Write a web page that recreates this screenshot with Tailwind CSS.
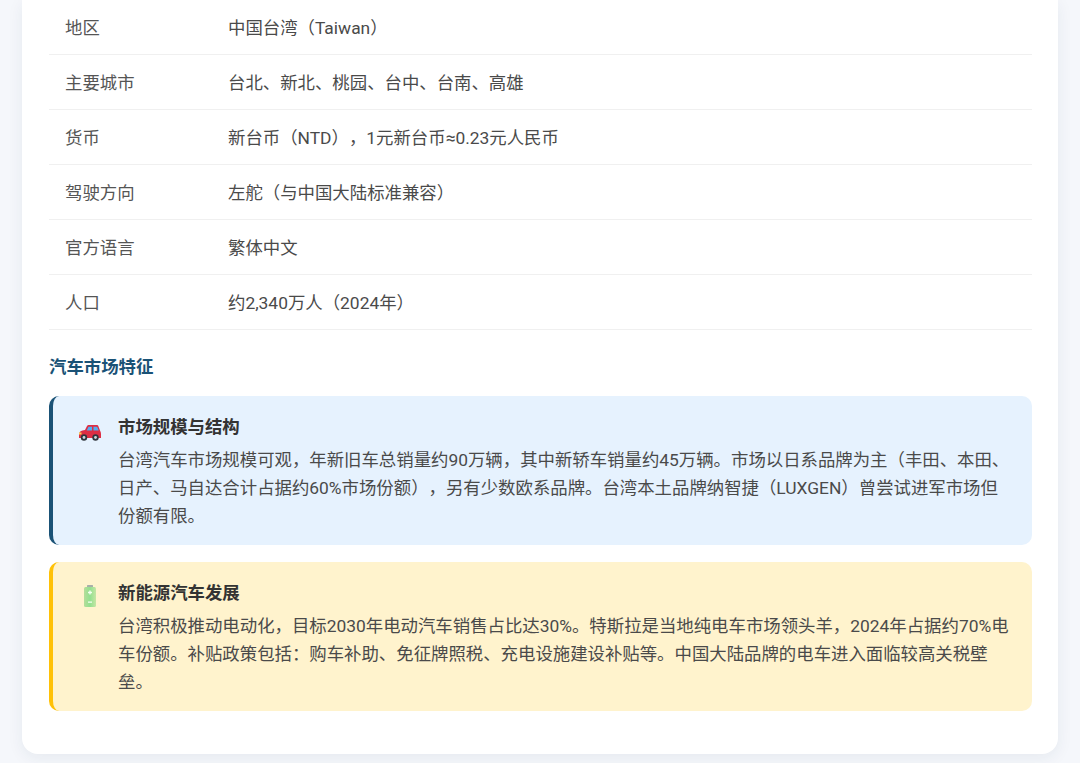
<!DOCTYPE html>
<html lang="zh-CN">
<head>
    <meta charset="UTF-8">
    <title>台湾汽车市场</title>
    <script src="https://cdn.jsdelivr.net/npm/@tailwindcss/browser@4"></script>
</head>
<body class="h-[763px] overflow-hidden bg-[#f5f7fb] font-['Roboto','Noto_Sans_CJK_SC',sans-serif] text-[17.4px] text-[#4a4a4a] [text-spacing-trim:space-all]">
    <div class="mx-[22px] h-[754px] rounded-b-2xl bg-white pr-[26px] pl-[27px] shadow-[0_4px_16px_rgba(30,50,90,0.07)]">
        <!-- basic info -->
        <div class="grid grid-cols-[179px_1fr]">
            <div class="flex h-[55px] items-center border-b border-[#f0f0f0] pt-[2px] pl-4 text-[#555]">地区</div>
            <div class="flex h-[55px] items-center border-b border-[#f0f0f0] pt-[2px]">中国台湾（Taiwan）</div>
            <div class="flex h-[55px] items-center border-b border-[#f0f0f0] pt-[2px] pl-4 text-[#555]">主要城市</div>
            <div class="flex h-[55px] items-center border-b border-[#f0f0f0] pt-[2px]">台北、新北、桃园、台中、台南、高雄</div>
            <div class="flex h-[55px] items-center border-b border-[#f0f0f0] pt-[2px] pl-4 text-[#555]">货币</div>
            <div class="flex h-[55px] items-center border-b border-[#f0f0f0] pt-[2px]">新台币（NTD），1元新台币≈0.23元人民币</div>
            <div class="flex h-[55px] items-center border-b border-[#f0f0f0] pt-[2px] pl-4 text-[#555]">驾驶方向</div>
            <div class="flex h-[55px] items-center border-b border-[#f0f0f0] pt-[2px]">左舵（与中国大陆标准兼容）</div>
            <div class="flex h-[55px] items-center border-b border-[#f0f0f0] pt-[2px] pl-4 text-[#555]">官方语言</div>
            <div class="flex h-[55px] items-center border-b border-[#f0f0f0] pt-[2px]">繁体中文</div>
            <div class="flex h-[55px] items-center border-b border-[#f0f0f0] pt-[2px] pl-4 text-[#555]">人口</div>
            <div class="flex h-[55px] items-center border-b border-[#f0f0f0] pt-[2px]">约2,340万人（2024年）</div>
        </div>

        <h3 class="mt-[23px] mb-[15px] text-[17.4px] leading-[28px] font-bold text-[#1a5276]">汽车市场特征</h3>

        <!-- market size -->
        <div class="flex h-[149px] rounded-[10px] border-l-4 border-[#1a5276] bg-[#e6f2fe] pt-[17px] pr-5 pl-[25px]">
            <div class="w-[40px] shrink-0 pt-[9px]">
                <svg width="24" height="20" viewBox="0 0 24 20" class="block">
                    <path d="M1 12.500C1 10 2.500 9 4.500 8.500L7 8l2-4c.5-.8 1.200-1 2-1h7.500c1 0 1.700.5 2 1.400l1.500 4.100c.7 1 1 2.200 1 3.500V16H1z" fill="#dd2e44"/>
                    <path d="M10.500 4.800H14V8.500H8.700zM15.500 4.800h3c.5 0 .8.200 1 .7l1.200 3h-5.200z" fill="#55acee"/>
                    <rect x="1" y="10.500" width="2.500" height="2" fill="#ffcc4d"/>
                    <circle cx="6" cy="15.500" r="3.200" fill="#31373d"/>
                    <circle cx="6" cy="15.500" r="1.400" fill="#ccd6dd"/>
                    <circle cx="17.500" cy="15.500" r="3.200" fill="#31373d"/>
                    <circle cx="17.500" cy="15.500" r="1.400" fill="#ccd6dd"/>
                </svg>
            </div>
            <div>
                <div class="mb-[5px] leading-[28px] font-bold text-[#333]">市场规模与结构</div>
                <p class="leading-[28px]">台湾汽车市场规模可观，年新旧车总销量约90万辆，其中新轿车销量约45万辆。市场以日系品牌为主（丰田、本田、日产、马自达合计占据约60%市场份额），另有少数欧系品牌。台湾本土品牌纳智捷（LUXGEN）曾尝试进军市场但份额有限。</p>
            </div>
        </div>

        <!-- new energy -->
        <div class="mt-[17px] flex h-[149px] rounded-[10px] border-l-4 border-[#ffc107] bg-[#fff3cd] pt-[17px] pr-5 pl-[25px]">
            <div class="w-[40px] shrink-0 pt-[5px]">
                <svg width="24" height="24" viewBox="0 0 24 24" class="block">
                    <defs>
                        <linearGradient id="batt" x1="0" y1="0" x2="1" y2="0">
                            <stop offset="0" stop-color="#b5dd9a"/>
                            <stop offset="0.5" stop-color="#93e08f"/>
                            <stop offset="1" stop-color="#c4e6a4"/>
                        </linearGradient>
                    </defs>
                    <rect x="9" y="1" width="6" height="3" rx="0.500" fill="#a8b0a8"/>
                    <rect x="6" y="3" width="12" height="20" rx="1.500" fill="url(#batt)"/>
                    <path d="M11.300 6.500h1.400v1.300H14v1.400h-1.300v1.300h-1.400V9.200H10V7.800h1.300zM10 17.500h4v1.300h-4z" fill="#f4fff0"/>
                </svg>
            </div>
            <div>
                <div class="mb-[5px] leading-[28px] font-bold text-[#333]">新能源汽车发展</div>
                <p class="leading-[28px]">台湾积极推动电动化，目标2030年电动汽车销售占比达30%。特斯拉是当地纯电车市场领头羊，2024年占据约70%电车份额。补贴政策包括：购车补助、免征牌照税、充电设施建设补贴等。中国大陆品牌的电车进入面临较高关税壁垒。</p>
            </div>
        </div>
    </div>
</body>
</html>
